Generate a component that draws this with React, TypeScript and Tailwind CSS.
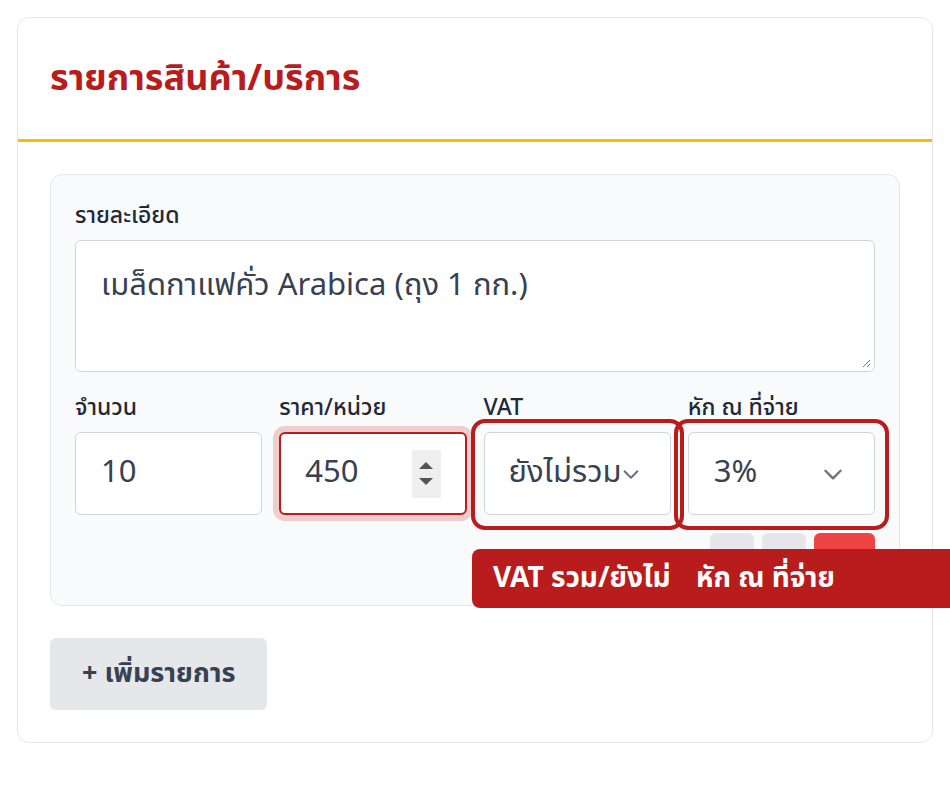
import React from "react";

function Chevron({ className = "" }: { className?: string }) {
  return (
    <svg
      viewBox="0 0 24 24"
      className={className}
      fill="none"
      stroke="currentColor"
      strokeWidth={2.2}
      strokeLinecap="round"
      strokeLinejoin="round"
    >
      <path d="M5 9l7 7 7-7" />
    </svg>
  );
}

function Label({ children }: { children: React.ReactNode }) {
  return <div className="mb-[7px] text-[23px] font-medium leading-[33px] text-[#1f2937]">{children}</div>;
}

export default function App() {
  return (
    <div
      className="relative h-[808px] w-[950px] overflow-hidden bg-white p-[17px]"
      style={{ fontFamily: '"Noto Sans Thai", "Noto Sans", "Liberation Sans", sans-serif' }}
    >
      <div className="relative rounded-xl border border-[#e5e7eb] bg-white">
        <div className="flex h-[121px] items-center px-8">
          <h2 className="text-[36px] font-bold text-[#b91c1c]">รายการสินค้า/บริการ</h2>
        </div>
        <div className="h-[3px] bg-[#fbbc05]" />

        <div className="p-8">
          <div className="rounded-xl border border-[#e5e7eb] bg-[#f9fafb] px-6 pb-6 pt-[25px]">
            <Label>รายละเอียด</Label>
            <div className="relative h-[132px] rounded-md border border-[#d1d5db] bg-white px-[25px] py-[24px] text-[31px] leading-[42px] text-[#374151]">
              เมล็ดกาแฟคั่ว Arabica (ถุง 1 กก.)
              <svg viewBox="0 0 10 10" className="absolute bottom-[3px] right-[3px] h-[10px] w-[10px] text-[#6b7280]">
                <path d="M9 2L2 9M9 6L6 9" stroke="currentColor" strokeWidth={1} />
              </svg>
            </div>

            <div className="mt-[20px] grid grid-cols-4 gap-[17px]">
              <div>
                <Label>จำนวน</Label>
                <div className="flex h-[83px] items-center rounded-md border border-[#d1d5db] bg-white px-[25px] text-[31px] text-[#374151]">
                  10
                </div>
              </div>
              <div>
                <Label>ราคา/หน่วย</Label>
                <div className="flex h-[83px] items-center rounded-md border-2 border-[#b91c1c] bg-white pl-[24px] pr-[24px] text-[31px] text-[#374151] ring-[6px] ring-[#b91c1c]/20">
                  <span className="flex-1">450</span>
                  <div className="flex h-[48px] w-[29px] flex-col items-center justify-center gap-[9px] bg-[#efefef]">
                    <span className="h-0 w-0 border-x-[7px] border-b-[7px] border-x-transparent border-b-[#555]" />
                    <span className="h-0 w-0 border-x-[7px] border-t-[7px] border-x-transparent border-t-[#555]" />
                  </div>
                </div>
              </div>
              <div>
                <Label>VAT</Label>
                <div className="relative flex h-[83px] items-center rounded-md border border-[#d1d5db] bg-white px-[24px] text-[31px] text-[#374151]">
                  <Chevron className="absolute right-[28px] top-1/2 h-[22px] w-[22px] -translate-y-1/2 text-[#6b7280]" />
                  <span className="relative whitespace-nowrap">ยังไม่รวม</span>
                </div>
              </div>
              <div>
                <Label>หัก ณ ที่จ่าย</Label>
                <div className="relative flex h-[83px] items-center rounded-md border border-[#d1d5db] bg-white px-[25px] text-[31px] text-[#374151]">
                  <span>3%</span>
                  <Chevron className="absolute right-[28px] top-1/2 h-[26px] w-[26px] -translate-y-1/2 text-[#6b7280]" />
                </div>
              </div>
            </div>

            <div className="mt-[18px] flex justify-end gap-2">
              <div className="h-12 w-[44px] rounded-md bg-[#e5e7eb]" />
              <div className="h-12 w-[44px] rounded-md bg-[#e5e7eb]" />
              <div className="h-12 w-[61px] rounded-md bg-[#ef4444]" />
            </div>
          </div>

          <button className="mt-8 flex h-[72px] items-center rounded-md bg-[#e5e7eb] px-8 text-[27px] font-bold text-[#374151]">
            + เพิ่มรายการ
          </button>
        </div>

        {/* annotation overlays */}
        <div className="absolute left-[453px] top-[401px] h-[111px] w-[213px] rounded-[14px] border-4 border-[#b91c1c]" />
        <div className="absolute left-[656px] top-[401px] h-[111px] w-[215px] rounded-[14px] border-4 border-[#b91c1c]" />
        <div className="absolute left-[454px] top-[531px] flex h-[59px] w-[540px] items-center rounded-l-lg bg-[#b91c1c] pl-[21px] text-[28px] font-bold text-white">
          <span className="w-[203px] whitespace-nowrap">VAT รวม/ยังไม่</span>
          <span className="whitespace-nowrap">หัก ณ ที่จ่าย</span>
        </div>
      </div>
    </div>
  );
}
